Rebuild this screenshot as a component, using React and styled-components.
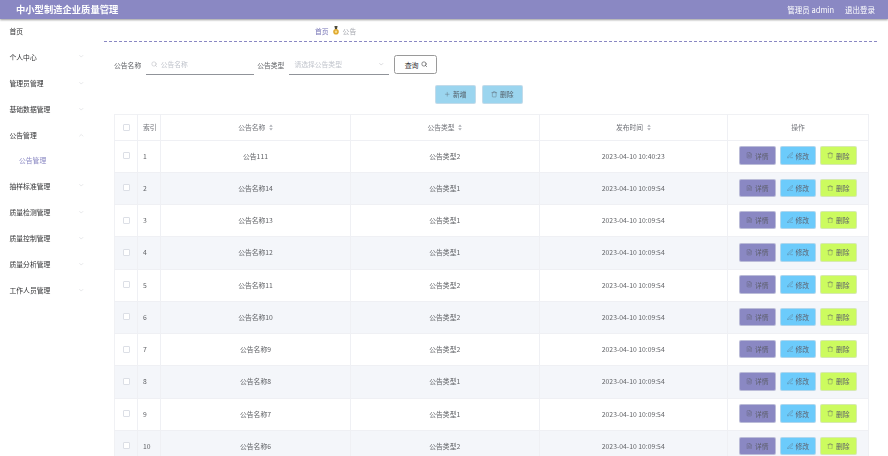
import React from "react";
import styled, { createGlobalStyle } from "styled-components";
import { Search, Plus, Trash, FileText, PenLine, ChevronDown, ChevronUp } from "lucide-react";

const Global = createGlobalStyle`
  html, body { margin: 0; padding: 0; background: #fff; height: 456px; overflow: hidden; }
  #root { height: 456px; overflow: hidden; }
  * { box-sizing: border-box; }
`;

const Page = styled.div`
  width: 888px; height: 456px; overflow: hidden; display: flex; flex-direction: column;
  font-family: "Noto Sans CJK SC", "Liberation Sans", sans-serif; color: #606266; font-size: 6.8px;
  filter: blur(0.35px);
`;
const Header = styled.header`
  height: 18.5px; flex: none; background: #8a88c3; display: flex; align-items: center; justify-content: space-between;
  padding: 0 13px 0 16px; color: #fff; box-shadow: 0 1px 2px rgba(0,0,0,.4); position: relative; z-index: 2;
`;
const Title = styled.h1`margin: 0; font-size: 9.3px; font-weight: 700;`;
const HeaderRight = styled.div`display: flex; gap: 11px; font-size: 7.5px;`;
const Body = styled.div`display: flex; flex: 1; min-height: 0;`;
const Side = styled.aside`
  width: 104px; flex: none; display: flex; flex-direction: column;
`;
const MenuItem = styled.div`
  height: ${p => p.$sub ? "24.4px" : "26.15px"}; flex: none; display: flex; align-items: center; justify-content: space-between;
  padding: 0 20px 2px ${p => p.$sub ? "19px" : "9.5px"};
  color: ${p => p.$sub ? "#8a88c3" : "#303133"};
  svg { width: 6.5px; height: 6.5px; color: #c4c6cc; stroke-width: 1.5; }
`;
const Main = styled.main`flex: 1; min-width: 0; display: flex; flex-direction: column;`;
const Crumbs = styled.nav`
  height: 23px; flex: none; margin-right: 11px; border-bottom: 1px dashed #8a88c3; display: flex; align-items: center;
  gap: 4px; padding: 2px 0 0 211px;
`;
const CrumbLink = styled.span`color: #7472b5;`;
const CrumbNow = styled.span`color: #a3a6ad;`;
const SearchBar = styled.form`
  display: flex; flex: none; align-items: center; margin: 13px 0 0 10px; height: 20px;
`;
const FieldLabel = styled.label`color: #606266; margin-right: 5px;`;
const InputWrap = styled.div`
  width: ${p => p.$w}px; height: 20px; border-bottom: 1px solid #909399; display: flex; align-items: center; gap: 3px; padding: 0 5px;
  margin-right: ${p => p.$mr}px; color: #c0c4cc;
  svg { width: 6.5px; height: 6.5px; stroke-width: 1.6; color: #a8abb2; flex: none; }
`;
const Fill = styled.span`flex: 1;`;
const QueryBtn = styled.button`
  width: 43px; height: 19px; background: #fff; border: 1px solid #9a9a9a; border-radius: 2.5px; font: inherit; color: #303133;
  display: flex; align-items: center; justify-content: center; gap: 2px; padding: 0; font-size: 7px;
  svg { width: 6.5px; height: 6.5px; }
`;
const Tools = styled.div`
  display: flex; flex: none; justify-content: center; gap: 6px; margin: 10.5px 0 0 10px; padding-right: 24px; width: 754px;
`;
const ToolBtn = styled.button`
  width: 41px; height: 18.5px; background: #9bd5ef; border: 1px solid rgba(220,223,230,.6); border-radius: 2px; font: inherit; color: #55606a;
  display: flex; align-items: center; justify-content: center; gap: 2px; padding: 0;
  svg { width: 6.5px; height: 6.5px; stroke-width: 1.4; }
`;
const Table = styled.table`
  margin: 10.5px 0 0 10px; width: 754px; border-collapse: collapse; table-layout: fixed; flex: none;
  border-top: 1px solid #f0f1f4; border-left: 1px solid #f0f1f4;
`;
const Th = styled.th`
  height: 25.5px; font-weight: 400; color: #707278; border-right: 1px solid #eff0f4; border-bottom: 1px solid #eff0f4;
  text-align: ${p => p.$left ? "left" : "center"}; padding: 0 0 0 ${p => p.$left ? "5px" : "0"};
`;
const Row = styled.tr`background: ${p => p.$alt ? "#f4f6fa" : "#fff"};`;
const Td = styled.td`
  height: 32.25px; padding: 0 0 1px ${p => p.$left ? "5px" : "0"}; text-align: ${p => p.$left ? "left" : "center"};
  color: #606266; border-right: 1px solid #eff0f4; border-bottom: 1px solid #eff0f4;
`;
const Check = styled.span`
  display: block; width: 7px; height: 7px; border: 1px solid #dcdfe6; border-radius: 1px; background: #fff; margin: 0 auto;
`;
const Sort = styled.svg`width: 4px; height: 7px; margin-left: 3.5px; vertical-align: -1px; fill: #a8abb2;`;
const Actions = styled.div`display: flex; justify-content: center; gap: 4px;`;
const ActionBtn = styled.button`
  width: 36.5px; height: 18.5px; border: 1px solid rgba(220,223,230,.6); border-radius: 2px; background: ${p => p.$bg}; font: inherit; color: #5d5f6b;
  display: flex; align-items: center; justify-content: center; gap: 2px; padding: 0;
  svg { width: 6.5px; height: 6.5px; stroke-width: 1.3; }
`;

const SortIcon = () => (
  <Sort viewBox="0 0 8 14"><path d="M4 1 7.5 5.5H.5Z" /><path d="M4 13 .5 8.5h7Z" /></Sort>
);
const Medal = () => (
  <svg width="6" height="9" viewBox="0 0 6 9">
    <path d="M1.4 0h3.2L3.9 3.4H2.1Z" fill="#4d4a3a" />
    <circle cx="3" cy="5.8" r="2.8" fill="#e0a92f" />
    <circle cx="3" cy="5.8" r="1.2" fill="#f6dd8e" />
  </svg>
);

const menu = [
  ["首页"], ["个人中心", "d"], ["管理员管理", "d"], ["基础数据管理", "d"], ["公告管理", "u"], ["公告管理", "s"],
  ["抽样标准管理", "d"], ["质量检测管理", "d"], ["质量控制管理", "d"], ["质量分析管理", "d"], ["工作人员管理", "d"],
];
const rows = [
  ["公告111", "公告类型2", "2023-04-10 10:40:23"],
  ["公告名称14", "公告类型1", "2023-04-10 10:09:54"],
  ["公告名称13", "公告类型1", "2023-04-10 10:09:54"],
  ["公告名称12", "公告类型1", "2023-04-10 10:09:54"],
  ["公告名称11", "公告类型2", "2023-04-10 10:09:54"],
  ["公告名称10", "公告类型2", "2023-04-10 10:09:54"],
  ["公告名称9", "公告类型2", "2023-04-10 10:09:54"],
  ["公告名称8", "公告类型1", "2023-04-10 10:09:54"],
  ["公告名称7", "公告类型1", "2023-04-10 10:09:54"],
  ["公告名称6", "公告类型2", "2023-04-10 10:09:54"],
];

export default function App() {
  return (
    <Page>
      <Global />
      <Header>
        <Title>中小型制造企业质量管理</Title>
        <HeaderRight><span>管理员 admin</span><span>退出登录</span></HeaderRight>
      </Header>
      <Body>
        <Side>
          {menu.map(([t, k], i) => (
            <MenuItem key={i} $sub={k === "s"}>
              <span>{t}</span>
              {k === "d" && <ChevronDown />}
              {k === "u" && <ChevronUp />}
            </MenuItem>
          ))}
        </Side>
        <Main>
          <Crumbs>
            <CrumbLink>首页</CrumbLink><Medal /><CrumbNow>公告</CrumbNow>
          </Crumbs>
          <SearchBar>
            <FieldLabel>公告名称</FieldLabel>
            <InputWrap $w={107.5} $mr={3.5}><Search /><span>公告名称</span></InputWrap>
            <FieldLabel>公告类型</FieldLabel>
            <InputWrap $w={100} $mr={5}><span>请选择公告类型</span><Fill /><ChevronDown /></InputWrap>
            <QueryBtn type="button">查询<Search /></QueryBtn>
          </SearchBar>
          <Tools>
            <ToolBtn type="button"><Plus />新增</ToolBtn>
            <ToolBtn type="button"><Trash />删除</ToolBtn>
          </Tools>
          <Table>
            <colgroup>
              <col style={{ width: 23 }} /><col style={{ width: 23 }} /><col style={{ width: 190 }} />
              <col style={{ width: 188.5 }} /><col style={{ width: 188.5 }} /><col style={{ width: 141 }} />
            </colgroup>
            <thead>
              <tr>
                <Th><Check /></Th>
                <Th $left>索引</Th>
                <Th>公告名称<SortIcon /></Th>
                <Th>公告类型<SortIcon /></Th>
                <Th>发布时间<SortIcon /></Th>
                <Th>操作</Th>
              </tr>
            </thead>
            <tbody>
              {rows.map((r, i) => (
                <Row key={i} $alt={i % 2 === 1}>
                  <Td><Check /></Td>
                  <Td $left>{i + 1}</Td>
                  <Td>{r[0]}</Td>
                  <Td>{r[1]}</Td>
                  <Td>{r[2]}</Td>
                  <Td>
                    <Actions>
                      <ActionBtn type="button" $bg="#8a88c3"><FileText />详情</ActionBtn>
                      <ActionBtn type="button" $bg="#6ccbfb"><PenLine />修改</ActionBtn>
                      <ActionBtn type="button" $bg="#ccfb5f"><Trash />删除</ActionBtn>
                    </Actions>
                  </Td>
                </Row>
              ))}
            </tbody>
          </Table>
        </Main>
      </Body>
    </Page>
  );
}
